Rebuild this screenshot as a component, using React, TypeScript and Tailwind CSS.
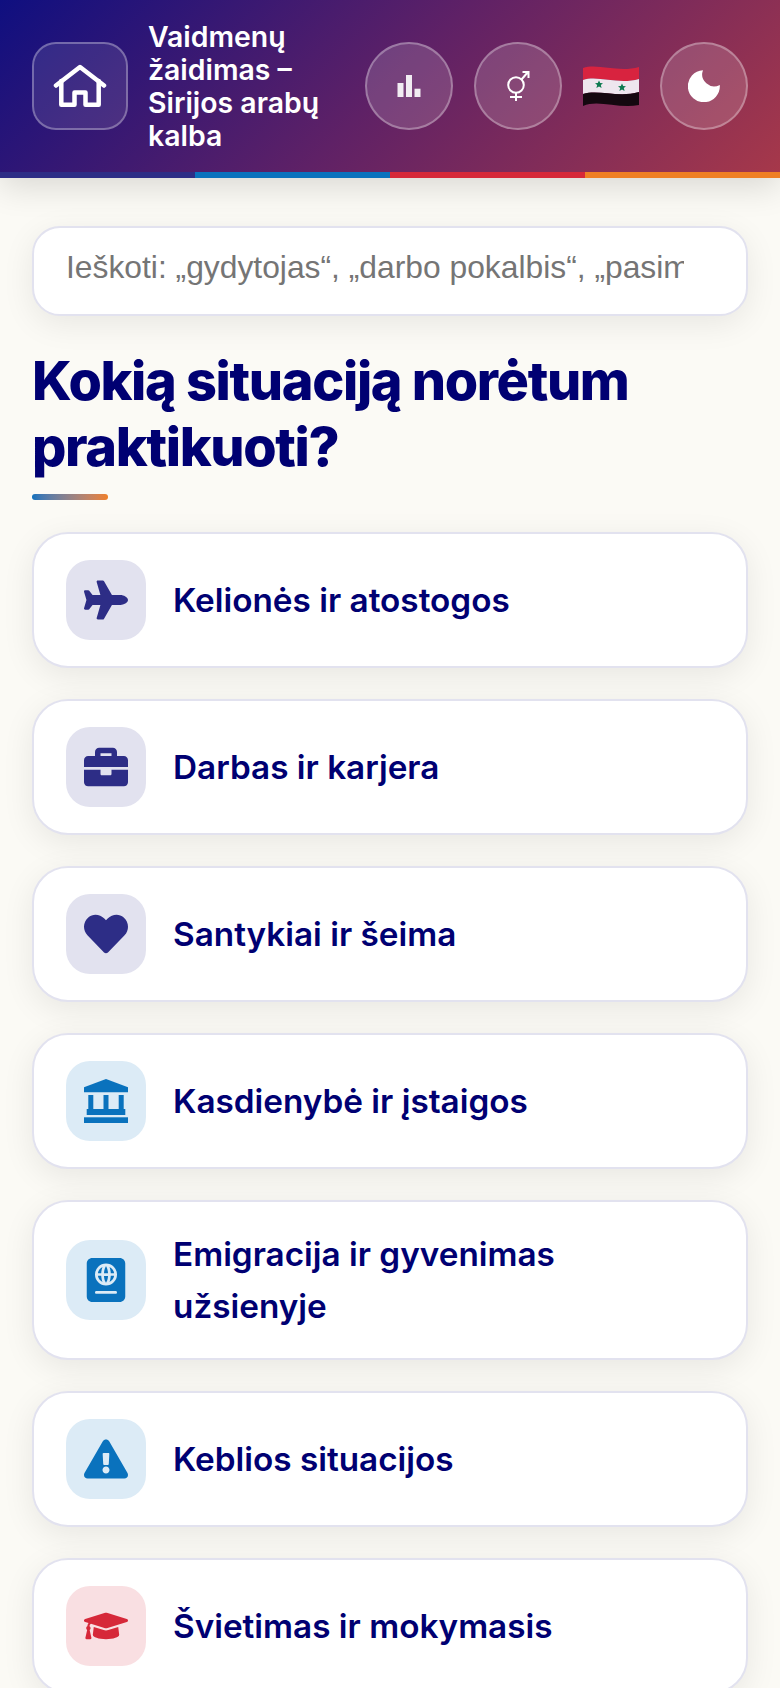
import React from 'react';
import { FaPlane, FaBriefcase, FaHeart, FaExclamationTriangle, FaGraduationCap } from 'react-icons/fa';
import { FaPassport } from 'react-icons/fa6';

const navy = 'text-[#2d2d86]';
const blue = 'text-[#0a72bd]';
const red = 'text-[#d62839]';

function BankIcon({ size }: { size: number }) {
  return (
    <svg width={size} height={size} viewBox="0 0 44 44" fill="currentColor">
      <path d="M22 0 L44 8.300 V13.300 H0 V8.300 Z" />
      <rect x="4.300" y="16" width="5" height="14" />
      <rect x="19.500" y="16" width="5" height="14" />
      <rect x="34.700" y="16" width="5" height="14" />
      <rect x="2.700" y="30" width="38.600" height="6" />
      <rect x="0" y="38.300" width="44" height="5.700" />
    </svg>
  );
}

const categories = [
  { label: 'Kelionės ir atostogos', icon: FaPlane, tile: 'bg-[#e2e2ef]', color: navy },
  { label: 'Darbas ir karjera', icon: FaBriefcase, tile: 'bg-[#e2e2ef]', color: navy },
  { label: 'Santykiai ir šeima', icon: FaHeart, tile: 'bg-[#e2e2ef]', color: navy },
  { label: 'Kasdienybė ir įstaigos', icon: BankIcon, tile: 'bg-[#dcebf6]', color: blue },
  { label: 'Emigracija ir gyvenimas užsienyje', icon: FaPassport, tile: 'bg-[#dcebf6]', color: blue },
  { label: 'Keblios situacijos', icon: FaExclamationTriangle, tile: 'bg-[#dcebf6]', color: blue },
  { label: 'Švietimas ir mokymasis', icon: FaGraduationCap, tile: 'bg-[#f9dfe2]', color: red },
];

function HomeIcon() {
  return (
    <svg width="54" height="44" viewBox="0 0 54 44" fill="none" stroke="white" strokeWidth="4.5" strokeLinejoin="round" strokeLinecap="round">
      <path d="M3 21.500 L27 3 L51 21.500" />
      <path d="M8.300 17 V40.750 H21.500 V28.500 H32.500 V40.750 H45.700 V17" />
    </svg>
  );
}

function ChartIcon() {
  return (
    <svg width="24" height="24" viewBox="0 0 24 24" fill="white" opacity="0.9">
      <rect x="0.500" y="9" width="6" height="14" />
      <rect x="9" y="1" width="6" height="22" />
      <rect x="17.500" y="14.700" width="6" height="8.300" />
    </svg>
  );
}

function GenderIcon() {
  return (
    <svg width="24" height="32" viewBox="0 0 24 32" fill="none" stroke="white" strokeWidth="2">
      <circle cx="10" cy="15" r="7.800" />
      <path d="M10 22.800 V31 M4 27 H16" />
      <path d="M15.500 9.500 L22 2 M16.500 2 H22.500 V8" />
    </svg>
  );
}

function MoonIcon() {
  return (
    <svg width="32" height="32" viewBox="0 0 32 32" fill="white">
      <path d="M15 0.200 A16 16 0 1 0 31.800 15 A12 12 0 0 1 15 0.200 Z" />
    </svg>
  );
}

function SyriaFlag() {
  return (
    <svg width="56" height="42" viewBox="0 0 56 42" className="shrink-0">
      <path d="M0 3 C15 -2 35 8 56 2 V14 C35 20 15 10 0 15 Z" fill="#d8233f" />
      <path d="M0 15 C15 10 35 20 56 14 V27 C35 33 15 24 0 29 Z" fill="#eee6ee" />
      <path d="M0 29 C15 24 35 33 56 27 V40 C35 44 15 34 0 41 Z" fill="#14080f" />
      <path d="M16 15.500 l1.200 2.600 2.800 .2 -2.200 1.800 .8 2.800 -2.600 -1.500 -2.600 1.500 .8 -2.800 -2.200 -1.800 2.800 -.2 Z" fill="#0d7a50" />
      <path d="M39 18.500 l1.200 2.600 2.800 .2 -2.200 1.800 .8 2.800 -2.600 -1.500 -2.600 1.500 .8 -2.800 -2.200 -1.800 2.800 -.2 Z" fill="#0d7a50" />
    </svg>
  );
}

function RoundButton({ children }: { children: React.ReactNode }) {
  return (
    <button className="flex h-[88px] w-[88px] shrink-0 items-center justify-center rounded-full border-2 border-white/30 bg-white/15">
      {children}
    </button>
  );
}

export default function App() {
  return (
    <div className="min-h-screen bg-[#fbfaf5] font-['Inter',sans-serif]">
      <header className="relative shadow-[0_8px_32px_rgba(0,0,0,0.14)]">
        <div className="flex h-[172px] items-center bg-[linear-gradient(135deg,#0f0f80_0%,#5f2166_50%,#a6384a_100%)] px-8">
          <button className="flex h-[88px] w-[96px] shrink-0 items-center justify-center rounded-[24px] border-2 border-white/30 bg-white/10">
            <HomeIcon />
          </button>
          <h1 className="ml-5 w-[198px] shrink-0 text-[28.4px] font-semibold leading-[33px] text-white">
            Vaidmenų žaidimas – Sirijos arabų kalba
          </h1>
          <div className="ml-auto flex items-center gap-[21px]">
            <RoundButton><ChartIcon /></RoundButton>
            <RoundButton><GenderIcon /></RoundButton>
            <SyriaFlag />
            <RoundButton><MoonIcon /></RoundButton>
          </div>
        </div>
        <div className="grid h-[6px] grid-cols-4">
          <div className="bg-[#2d2d86]" />
          <div className="bg-[#0a72bd]" />
          <div className="bg-[#d62839]" />
          <div className="bg-[#ef7f24]" />
        </div>
      </header>

      <main className="flex flex-col px-8 pt-12">
        <div className="flex h-[90px] items-center rounded-[28px] border-2 border-[#e2e2ef] bg-white pl-8 pr-[62px] shadow-[0_8px_32px_rgba(0,0,0,0.08)]">
          <input
            readOnly
            placeholder="Ieškoti: „gydytojas“, „darbo pokalbis“, „pasimatymas“"
            className="w-full bg-transparent pb-[6px] font-['Liberation_Sans',sans-serif] text-[31.8px] outline-none placeholder:text-[#757575]"
          />
        </div>

        <h2 className="mt-[31.5px] text-[54px] font-extrabold leading-[66px] tracking-[-1.35px] text-[#000072]">
          Kokią situaciją norėtum praktikuoti?
        </h2>
        <div className="mt-[14px] h-[6px] w-[76px] rounded-full bg-gradient-to-r from-[#0a72bd] to-[#ef7f24]" />

        <div className="mt-[32px] flex flex-col gap-[31px]">
          {categories.map((c) => {
            const Icon = c.icon;
            return (
              <div
                key={c.label}
                className="flex items-center gap-[27px] rounded-[36px] border-2 border-[#e2e2ef] bg-white py-[26px] pl-8 pr-12 shadow-[0_8px_32px_rgba(0,0,0,0.08)]"
              >
                <div className={`flex h-20 w-20 shrink-0 items-center justify-center rounded-[24px] ${c.tile} ${c.color}`}>
                  <Icon size={44} />
                </div>
                <span className="text-[33.3px] font-semibold leading-[52px] text-[#000072]">{c.label}</span>
              </div>
            );
          })}
        </div>
      </main>
    </div>
  );
}
